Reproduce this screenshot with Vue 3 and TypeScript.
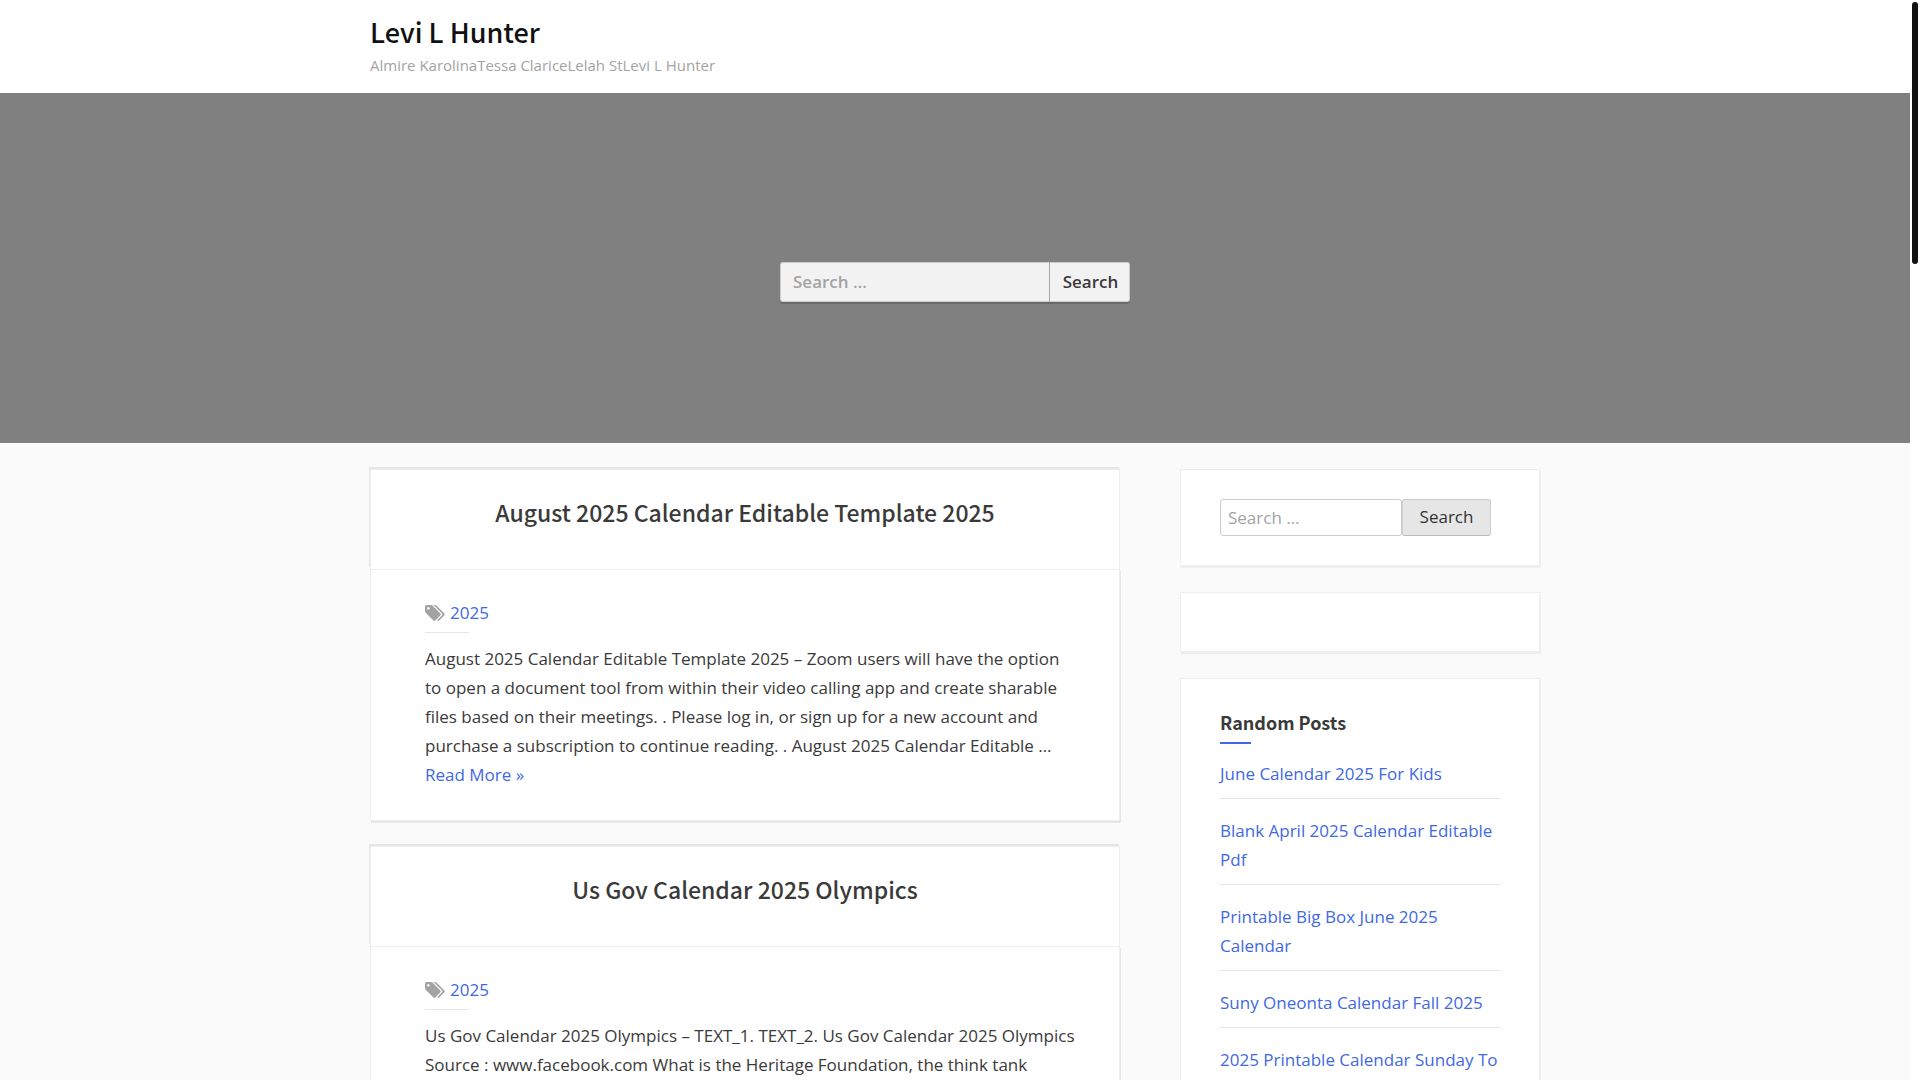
<script setup lang="ts">
interface Post {
  title: string
  tag: string
  excerpt: string[]
  more?: string
}

const posts: Post[] = [
  {
    title: 'August 2025 Calendar Editable Template 2025',
    tag: '2025',
    excerpt: [
      'August 2025 Calendar Editable Template 2025 – Zoom users will have the option',
      'to open a document tool from within their video calling app and create sharable',
      'files based on their meetings. . Please log in, or sign up for a new account and',
      'purchase a subscription to continue reading. . August 2025 Calendar Editable …',
    ],
    more: 'Read More »',
  },
  {
    title: 'Us Gov Calendar 2025 Olympics',
    tag: '2025',
    excerpt: [
      'Us Gov Calendar 2025 Olympics – TEXT_1. TEXT_2. Us Gov Calendar 2025 Olympics',
      'Source : www.facebook.com What is the Heritage Foundation, the think tank',
    ],
  },
]

const randomPosts: string[] = [
  'June Calendar 2025 For Kids',
  'Blank April 2025 Calendar Editable Pdf',
  'Printable Big Box June 2025 Calendar',
  'Suny Oneonta Calendar Fall 2025',
  '2025 Printable Calendar Sunday To',
]
</script>

<template>
  <div class="window">
    <div class="page">
      <header class="site-header">
        <div class="container">
          <h1 class="site-title"><a href="#">Levi L Hunter</a></h1>
          <p class="tagline">Almire KarolinaTessa ClariceLelah StLevi L Hunter</p>
        </div>
      </header>

      <section class="hero">
        <form class="hero-search" role="search" @submit.prevent>
          <input type="search" placeholder="Search …" aria-label="Search for" />
          <button type="submit">Search</button>
        </form>
      </section>

      <div class="container content">
        <main class="posts">
          <article v-for="post in posts" :key="post.title" class="post">
            <header class="post-header">
              <h2><a href="#">{{ post.title }}</a></h2>
            </header>
            <div class="post-body">
              <div class="tags">
                <svg viewBox="0 0 1920 1536" width="20" height="16" aria-hidden="true">
                  <path
                    d="M448 320q0-53-37.500-90.500T320 192t-90.500 37.500T192 320t37.500 90.500T320 448t90.500-37.500T448 320zm1067 576q0 53-37 90l-491 492q-39 37-91 37-53 0-90-37L91 762Q53 725 26.500 661T0 544V128q0-52 38-90t90-38h416q53 0 117 26.500T763 91l715 714q37 39 37 91zm384 0q0 53-37 90l-491 492q-39 37-91 37-36 0-59-14t-53-45l470-470q37-37 37-90 0-52-37-91L923 91q-38-38-102-64.500T704 0h224q53 0 117 26.500T1147 91l715 714q37 39 37 91z"
                  />
                </svg>
                <a href="#">{{ post.tag }}</a>
              </div>
              <p class="excerpt">{{ post.excerpt.join('\n') }}</p>
              <a v-if="post.more" href="#">{{ post.more }}</a>
            </div>
          </article>
        </main>

        <aside class="sidebar">
          <section class="widget">
            <form class="widget-search" role="search" @submit.prevent>
              <input type="search" placeholder="Search …" aria-label="Search for" />
              <button type="submit">Search</button>
            </form>
          </section>
          <section class="widget"></section>
          <section class="widget">
            <h3>Random Posts</h3>
            <ul>
              <li v-for="item in randomPosts" :key="item"><a href="#">{{ item }}</a></li>
            </ul>
          </section>
        </aside>
      </div>
    </div>
    <div class="scrollbar"><div class="thumb"></div></div>
  </div>
</template>

<style>
body {
  margin: 0;
  background: #fff;
}
</style>

<style scoped>
.window,
.window * {
  box-sizing: border-box;
}
.window {
  display: flex;
  height: 100vh;
  overflow: hidden;
  color: #3a3a3a;
  font: 17px/29px 'Open Sans', sans-serif;
}
.page {
  flex: 1;
  min-width: 0;
  overflow: hidden;
  background: #fafafa;
}
.scrollbar {
  width: 10px;
  padding: 2px;
}
.thumb {
  width: 6px;
  height: 262px;
  border-radius: 3px;
  background: #111;
}
h1,
h2,
h3,
p,
ul {
  margin: 0;
  padding: 0;
  list-style: none;
}
a {
  color: #4169e1;
  text-decoration: none;
}
h1,
h2,
h3 {
  font-family: 'Noto Sans CJK SC', sans-serif;
  font-weight: 500;
}
h1 a,
h2 a {
  color: inherit;
}
input,
button {
  margin: 0;
  font: inherit;
  outline: none;
  appearance: none;
}
input::placeholder {
  color: #a3a3a3;
  opacity: 1;
}
.container {
  max-width: 1170px;
  margin: 0 auto;
}
.site-header {
  padding: 12px 0 16px;
  background: #fff;
}
.site-title {
  color: #111;
  font-size: 27px;
  line-height: 40px;
}
.tagline {
  padding-top: 1px;
  color: #a3a3a3;
  font-size: 15px;
  line-height: 24px;
}
.hero {
  display: flex;
  align-items: center;
  justify-content: center;
  height: 350px;
  padding-top: 28px;
  background: #808080;
}
.hero-search {
  display: flex;
  width: 350px;
  height: 40px;
  font-weight: 600;
}
.hero-search input {
  flex: 1;
  min-width: 0;
  padding: 0 12px 2px;
  border: 1px solid #ccc;
  border-right-color: #a8a8a8;
  border-radius: 3px 0 0 3px;
  background: #f2f2f2;
  box-shadow: 0 2px 0 #6b6b6b;
}
.hero-search button {
  width: 80px;
  padding: 0 0 2px 2px;
  border: 1px solid #ccc;
  border-left: 0;
  border-radius: 0 3px 3px 0;
  background: #f2f2f2;
  color: #3a3a3a;
  box-shadow: 0 2px 0 #6b6b6b;
}
.content {
  display: flex;
  gap: 60px;
  padding-top: 26px;
}
.posts {
  flex: 1;
  min-width: 0;
}
.post {
  margin-bottom: 25px;
}
.post-header {
  height: 100px;
  padding-top: 23px;
  border: 1px solid #eee;
  border-bottom: 0;
  background: #fff;
  box-shadow: -1px -2px 0 #e6e6e6;
  text-align: center;
}
h2 {
  font-size: 23px;
  line-height: 38px;
}
.post-body {
  position: relative;
  padding: 28px 40px 31px 54px;
  border: 1px solid #eee;
  background: #fff;
  box-shadow: 1px 2px 0 #e6e6e6;
}
.excerpt {
  white-space: pre-line;
}
.tags {
  display: flex;
  align-items: center;
  gap: 5px;
  margin-bottom: 11px;
  padding-bottom: 6px;
  background: linear-gradient(#e6e6e6, #e6e6e6) left bottom / 44px 1px no-repeat;
}
.tags svg {
  fill: #a3a3a3;
}
.sidebar {
  width: 360px;
}
.widget {
  min-height: 60px;
  margin-bottom: 26px;
  padding: 29px 39px;
  border: 1px solid #eee;
  background: #fff;
  box-shadow: 1px 2px 0 #eee;
}
.widget-search {
  display: flex;
}
.widget-search input {
  width: 182px;
  height: 37px;
  padding: 0 7px;
  border: 1px solid #ccc;
  border-radius: 3px;
}
.widget-search button {
  width: 89px;
  height: 37px;
  padding: 0 0 2px;
  border: 1px solid #ccc;
  border-bottom-color: #bbb;
  border-radius: 3px;
  background: #e6e6e6;
  color: #333;
}
h3 {
  margin-bottom: 15px;
  padding-bottom: 8px;
  background: linear-gradient(#4169e1, #4169e1) left bottom / 31px 2px no-repeat;
  font-size: 18px;
  font-weight: 700;
  line-height: 28px;
}
li {
  margin-bottom: 17px;
  padding-bottom: 10px;
  border-bottom: 1px solid #e6e6e6;
}
</style>
